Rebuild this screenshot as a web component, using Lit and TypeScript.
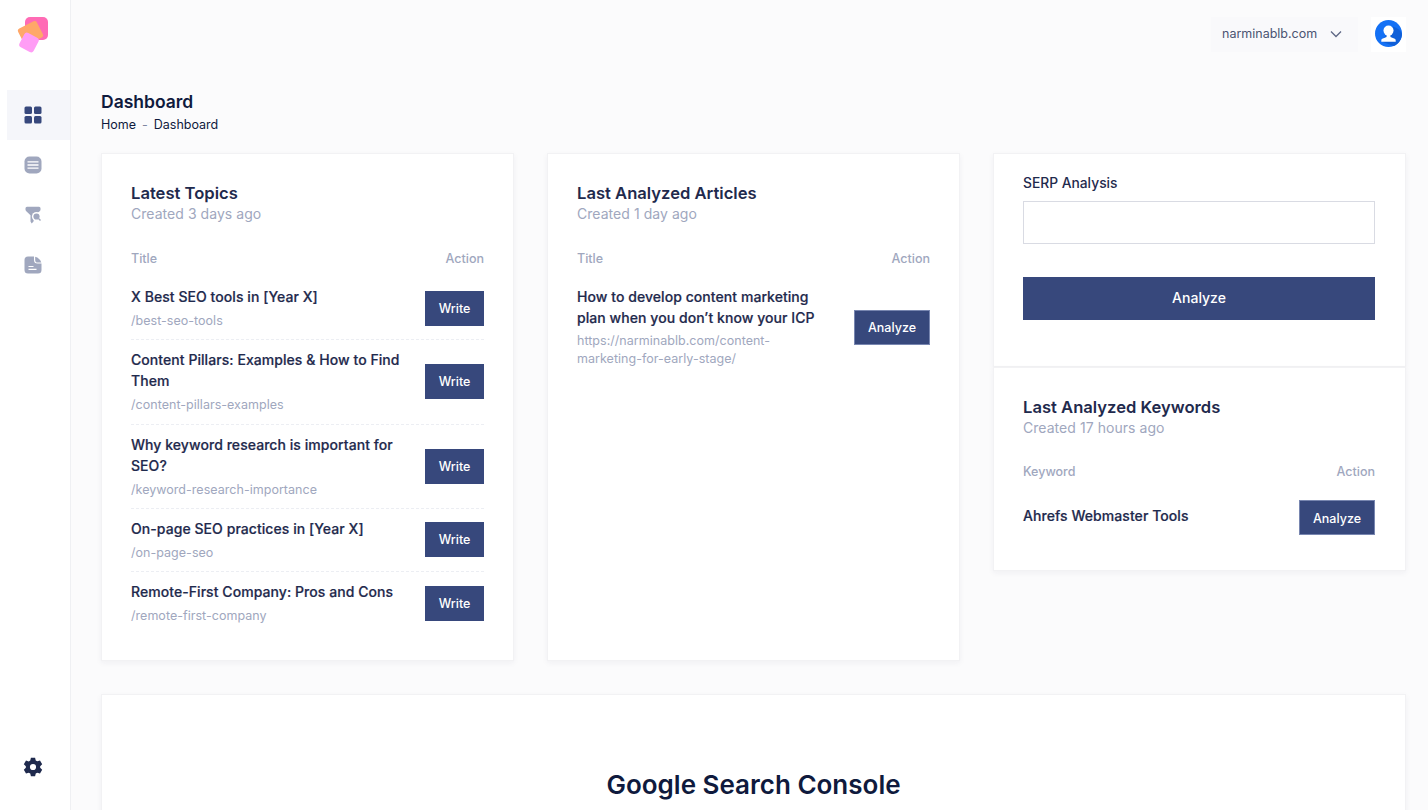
import { LitElement, html, css } from "lit";
import { customElement } from "lit/decorators.js";

const topics = [
  { t: "X Best SEO tools in [Year X]", s: "/best-seo-tools" },
  { t: "Content Pillars: Examples & How to Find Them", s: "/content-pillars-examples" },
  { t: "Why keyword research is important for SEO?", s: "/keyword-research-importance" },
  { t: "On-page SEO practices in [Year X]", s: "/on-page-seo" },
  { t: "Remote-First Company: Pros and Cons", s: "/remote-first-company" },
];

@customElement("app-root")
export class AppRoot extends LitElement {
  static styles = css`
    :host { display: block; height: 810px; overflow: hidden; background: #fbfbfc; font-family: Inter, "Liberation Sans", sans-serif; color: #1f2a4d; }
    * { box-sizing: border-box; }
    .shell { display: flex; height: 810px; }
    .side { width: 71px; flex: none; background: #fff; border-right: 1px solid #eff0f3; display: flex; flex-direction: column; }
    .logo { height: 90px; padding: 16px 0 0 17px; }
    .logo svg { display: block; }
    .nav { display: flex; flex-direction: column; padding-left: 7px; }
    .nav div { height: 50px; display: flex; align-items: center; padding-left: 17px; }
    .nav div.on { background: #f5f6fa; }
    .gear { margin-top: auto; height: 85px; padding: 32px 0 0 23px; }
    .main { flex: 1; min-width: 0; padding: 0 22px 0 30px; }
    .top { height: 91px; display: flex; justify-content: flex-end; align-items: flex-start; padding-top: 17px; gap: 13px; }
    .domain { width: 147px; height: 35px; background: #f9f9fb; display: flex; align-items: center; justify-content: space-between; padding: 0 16px 2px 11px; font-size: 12.5px; color: #4b5472; }
    .ava { width: 35px; height: 35px; background: #fff; padding: 3px 0 0 4px; }
    .avatar { display: block; }
    h1 { margin: 0; font-size: 17.5px; line-height: 22px; font-weight: 600; color: #0f1a3d; }
    .crumb { display: flex; font-size: 12.5px; line-height: 16px; margin-top: 4px; color: #0f1a3d; gap: 6px; }
    .crumb i { font-style: normal; color: #7e86a0; }
    .grid { display: grid; grid-template-columns: repeat(3, 413px); gap: 33px; margin-top: 20px; align-items: start; }
    .card { background: #fff; border: 1px solid #f2f2f4; box-shadow: 0 2px 6px rgba(30, 40, 80, .05); }
    .tall { height: 508px; padding: 28px 29px 0; }
    h2 { margin: 0; font-size: 16.6px; line-height: 22px; font-weight: 600; color: #1f2a4d; }
    .sub { font-size: 14px; line-height: 18px; color: #a0a7be; margin-top: 1px; letter-spacing: .05px; }
    .head { display: flex; justify-content: space-between; font-size: 12.5px; line-height: 16px; font-weight: 500; color: #a0a7be; margin-top: 28px; margin-bottom: 10px; }
    .row { display: flex; justify-content: space-between; align-items: center; border-bottom: 1px dashed #eceef3; padding: 9px 0 9.25px; }
    .row:last-child { border-bottom: 0; }
    .row .t { font-size: 14px; line-height: 21px; font-weight: 500; color: #1f2a4d; width: 280px; letter-spacing: .06px; -webkit-text-stroke: .2px #1f2a4d; }
    .row .s { font-size: 12.5px; line-height: 19px; color: #a0a7be; margin-top: 4px; letter-spacing: .03px; }
    .art .t { width: 250px; }
    .art .s { width: 230px; line-height: 18px; }
    button { border: 0; background: #37487c; color: #fff; font: 500 12.5px Inter, sans-serif; height: 35px; padding: 0; flex: none; }
    .w { width: 59px; }
    .a { width: 76px; border: 1px solid #7886b0; padding-top: 1px; }
    .stack { display: flex; flex-direction: column; }
    .serp { height: 214px; padding: 19px 30px 0 29px; }
    .serp label { display: block; font-size: 13.8px; line-height: 20px; font-weight: 500; color: #1f2a4d; }
    .serp .inp { height: 43px; border: 1px solid #d9dbe3; background: #fff; margin-top: 8px; }
    .serp button { width: 100%; height: 43px; margin-top: 33px; font-size: 14px; padding-bottom: 3px; }
    .kw { height: 204px; padding: 28px 30px 0 29px; }
    .kw .head { margin-top: 27px; margin-bottom: 9px; }
    .kw .row { border: 0; padding: 0; margin-top: 20px; }
    .kw .row .t { line-height: 18px; margin-top: -4px; }
    .gsc { margin-top: 33px; height: 200px; padding-top: 73px; text-align: center; font-size: 26px; font-weight: 600; color: #0f1a3d; line-height: 34px; }
  `;

  render() {
    return html`<div class="shell">
      <aside class="side">
        <div class="logo">
          <svg width="32" height="38" viewBox="0 0 32 38">
            <rect x="8" y="1" width="23" height="23" rx="5" fill="#ff6bb5"/>
            <rect x="3" y="8" width="21" height="18" rx="2.500" fill="#ffa869" transform="rotate(-27 13.500 17)"/>
            <rect x="4" y="18.500" width="16" height="16" rx="3" fill="#ff9df5" transform="rotate(28 12 26.500)"/>
          </svg>
        </div>
        <nav class="nav">
          <div class="on"><svg width="18" height="18" viewBox="0 0 18 18" fill="#37487c"><rect x="0.500" y="0.500" width="7.500" height="7.500" rx="1.500"/><rect x="10" y="0.500" width="7.500" height="7.500" rx="1.500"/><rect x="0.500" y="10" width="7.500" height="7.500" rx="1.500"/><rect x="10" y="10" width="7.500" height="7.500" rx="1.500"/></svg></div>
          <div><svg width="18" height="18" viewBox="0 0 18 18"><rect x="0.500" y="0.500" width="17" height="17" rx="5" fill="#a0a7be"/><path d="M3.500 5.800h11M3.500 9h11M3.500 12.200h11" stroke="#fff" stroke-width="1.300"/></svg></div>
          <div><svg width="18" height="18" viewBox="0 0 18 18"><path d="M3 .8h12a1.500 1.500 0 0 1 1.500 1.500V3.800a2 2 0 0 1-.8 1.500l-5.200 4L9.500 15.500l-1.800 2-1.200-2V9.300L2.300 5.300A2 2 0 0 1 1.500 3.800V2.300A1.500 1.500 0 0 1 3 .8z" fill="#a0a7be"/><circle cx="12.500" cy="10.500" r="4.600" fill="#fff"/><circle cx="12.500" cy="10.500" r="3.100" fill="#a0a7be"/><path d="M14.500 12.500l2 2" stroke="#a0a7be" stroke-width="1.400"/></svg></div>
          <div><svg width="18" height="18" viewBox="0 0 18 18"><path d="M4 0.500h6v3.500a3.500 3.500 0 0 0 3.500 3.500h4V14a3.500 3.500 0 0 1-3.500 3.500H4A3.500 3.500 0 0 1 .5 14V4A3.500 3.500 0 0 1 4 .5z" fill="#a0a7be"/><path d="M11.200 .7c3 .8 5.300 3 6.100 5.800h-3.500a2.600 2.600 0 0 1-2.600-2.600z" fill="#a0a7be"/><path d="M4.500 10.500h5M4.500 13.300h8" stroke="#fff" stroke-width="1.200"/></svg></div>
        </nav>
        <div class="gear">
          <svg width="20" height="20" viewBox="0 0 24 24" fill="#1f2a4d"><path fill-rule="evenodd" d="M14.500 1h-5l-.8 3.300-1.800 1-3.300-1L1 8.700l2.400 2.300v2L1 15.300l2.600 4.500 3.300-1 1.800 1L9.500 23h5l.8-3.200 1.800-1 3.300 1 2.600-4.500-2.400-2.300v-2L23 8.700l-2.600-4.500-3.300 1-1.800-1zM12 8.300a3.700 3.700 0 1 1 0 7.400 3.700 3.700 0 0 1 0-7.400z"/></svg>
        </div>
      </aside>
      <main class="main">
        <div class="top">
          <div class="domain"><span>narminablb.com</span>
            <svg width="12" height="8" viewBox="0 0 12 8" fill="none"><path d="M1 1.500l5 5 5-5" stroke="#5e6785" stroke-width="1.300"/></svg></div>
          <div class="ava"><svg class="avatar" width="27" height="27" viewBox="0 0 28 28"><circle cx="14" cy="14" r="14" fill="#1471f5"/><path d="M19 7A14 14 0 0 1 28 14c0 6-3.500 11-8.500 13L6 22z" fill="#0f5fd8"/><circle cx="14" cy="11" r="5.200" fill="#fff"/><path d="M12 14h4v3.500l4.500 2a2 2 0 0 1 1 2v1h-15v-1a2 2 0 0 1 1-2l4.500-2z" fill="#fff"/></svg></div>
        </div>
        <h1>Dashboard</h1>
        <div class="crumb"><span>Home</span><i>-</i><span>Dashboard</span></div>
        <div class="grid">
          <section class="card tall">
            <h2>Latest Topics</h2><div class="sub">Created 3 days ago</div>
            <div class="head"><span>Title</span><span>Action</span></div>
            ${topics.map((r) => html`<div class="row"><div><div class="t">${r.t}</div><div class="s">${r.s}</div></div><button class="w">Write</button></div>`)}
          </section>
          <section class="card tall art">
            <h2>Last Analyzed Articles</h2><div class="sub">Created 1 day ago</div>
            <div class="head"><span>Title</span><span>Action</span></div>
            <div class="row"><div><div class="t">How to develop content marketing plan when you don’t know your ICP</div><div class="s">https://narminablb.com/content-marketing-for-early-stage/</div></div><button class="a">Analyze</button></div>
          </section>
          <div class="stack">
            <section class="card serp">
              <label>SERP Analysis</label>
              <div class="inp"></div>
              <button>Analyze</button>
            </section>
            <section class="card kw">
              <h2>Last Analyzed Keywords</h2><div class="sub">Created 17 hours ago</div>
              <div class="head"><span>Keyword</span><span>Action</span></div>
              <div class="row"><div class="t">Ahrefs Webmaster Tools</div><button class="a">Analyze</button></div>
            </section>
          </div>
        </div>
        <section class="card gsc">Google Search Console</section>
      </main>
    </div>`;
  }
}
